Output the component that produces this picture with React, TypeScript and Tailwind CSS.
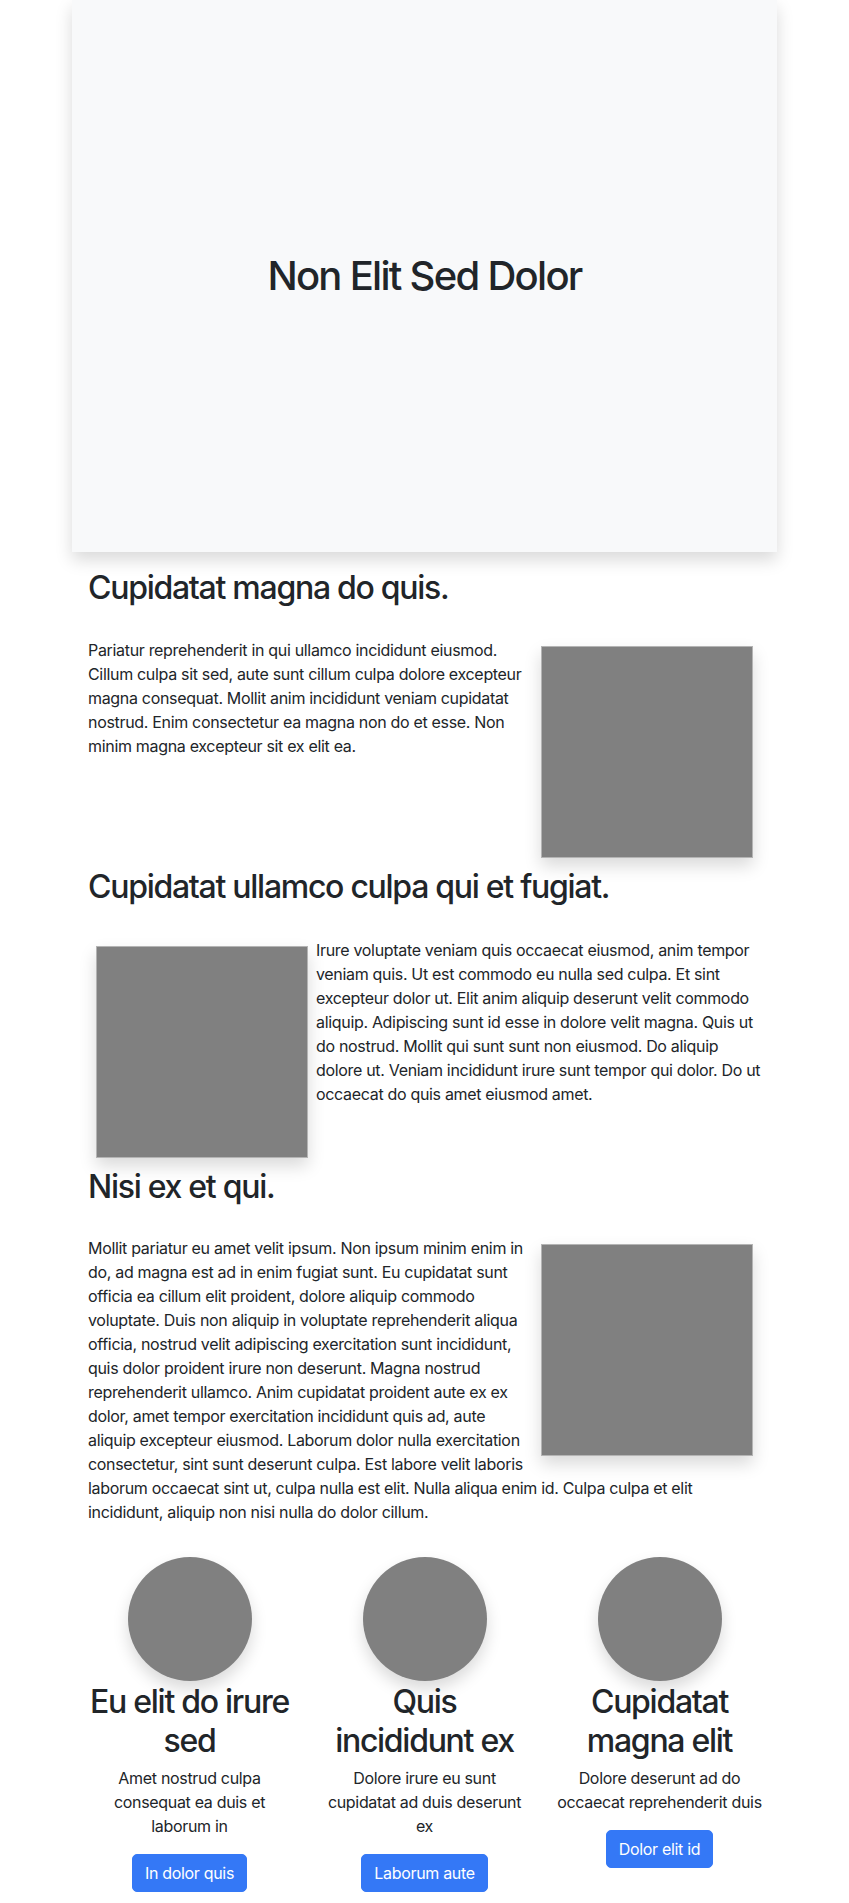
import React from "react";

const imgCls =
  "w-[212px] h-[212px] m-2 bg-[#808080] border border-[#b4b4b4] shadow-[0_8px_16px_rgba(0,0,0,0.15)]";

const h2Cls = "text-[32px] leading-[38.4px] font-medium tracking-[-0.04em]";

function Card({ title, text, btn }: { title: string; text: string; btn: string }) {
  return (
    <div className="px-[14px] flex flex-col items-center text-center">
      <div className="w-[124px] h-[124px] rounded-full bg-[#808080] shadow-[0_8px_16px_rgba(0,0,0,0.15)]" />
      <h2 className={"mt-[2px] " + h2Cls}>{title}</h2>
      <p className="mt-[6px]">{text}</p>
      <button className="mt-[16px] px-3 py-[6px] border border-[#3478f6] bg-[#3478f6] text-white rounded-[5px] text-[16px] leading-[24px] tracking-[-0.02em]">
        {btn}
      </button>
    </div>
  );
}

export default function App() {
  return (
    <div className="w-[705px] mx-auto pb-[11px] text-[#212529] font-['Inter','Liberation_Sans',sans-serif] text-[16px] leading-[24px] tracking-[-0.02em]">
      <div className="h-[552px] bg-[#f8f9fa] shadow-[0_8px_16px_rgba(0,0,0,0.15)] flex items-center justify-center">
        <h1 className="text-[40px] leading-[48px] font-medium tracking-[-0.043em]">Non Elit Sed Dolor</h1>
      </div>
      <div className="px-4">
        <section className="flow-root mt-[17px]">
          <h2 className={h2Cls}>Cupidatat magna do quis.</h2>
          <div className="mt-[31px]">
            <div className={"float-right " + imgCls} />
            <p>
              Pariatur reprehenderit in qui ullamco incididunt eiusmod. Cillum culpa sit sed, aute sunt cillum culpa
              dolore excepteur magna consequat. Mollit anim incididunt veniam cupidatat nostrud. Enim consectetur ea
              magna non do et esse. Non minim magna excepteur sit ex elit ea.
            </p>
          </div>
        </section>
        <section className="flow-root mt-[2px]">
          <h2 className={h2Cls}>Cupidatat ullamco culpa qui et fugiat.</h2>
          <div className="mt-[31px]">
            <div className={"float-left " + imgCls} />
            <p>
              Irure voluptate veniam quis occaecat eiusmod, anim tempor veniam quis. Ut est commodo eu nulla sed culpa.
              Et sint excepteur dolor ut. Elit anim aliquip deserunt velit commodo aliquip. Adipiscing sunt id esse in
              dolore velit magna. Quis ut do nostrud. Mollit qui sunt sunt non eiusmod. Do aliquip dolore ut. Veniam
              incididunt irure sunt tempor qui dolor. Do ut occaecat do quis amet eiusmod amet.
            </p>
          </div>
        </section>
        <section className="flow-root mt-[2px]">
          <h2 className={h2Cls}>Nisi ex et qui.</h2>
          <div className="mt-[30px]">
            <div className={"float-right " + imgCls} />
            <p>
              Mollit pariatur eu amet velit ipsum. Non ipsum minim enim in do, ad magna est ad in enim fugiat sunt. Eu
              cupidatat sunt officia ea cillum elit proident, dolore aliquip commodo voluptate. Duis non aliquip in
              voluptate reprehenderit aliqua officia, nostrud velit adipiscing exercitation sunt incididunt, quis dolor
              proident irure non deserunt. Magna nostrud reprehenderit ullamco. Anim cupidatat proident aute ex ex
              dolor, amet tempor exercitation incididunt quis ad, aute aliquip excepteur eiusmod. Laborum dolor nulla
              exercitation consectetur, sint sunt deserunt culpa. Est labore velit laboris laborum occaecat sint ut,
              culpa nulla est elit. Nulla aliqua enim id. Culpa culpa et elit incididunt, aliquip non nisi nulla do
              dolor cillum.
            </p>
          </div>
        </section>
      </div>
      <div className="grid grid-cols-3 mt-[33px]">
        <Card title="Eu elit do irure sed" text="Amet nostrud culpa consequat ea duis et laborum in" btn="In dolor quis" />
        <Card
          title="Quis incididunt ex"
          text="Dolore irure eu sunt cupidatat ad duis deserunt ex"
          btn="Laborum aute"
        />
        <Card title="Cupidatat magna elit" text="Dolore deserunt ad do occaecat reprehenderit duis" btn="Dolor elit id" />
      </div>
    </div>
  );
}
